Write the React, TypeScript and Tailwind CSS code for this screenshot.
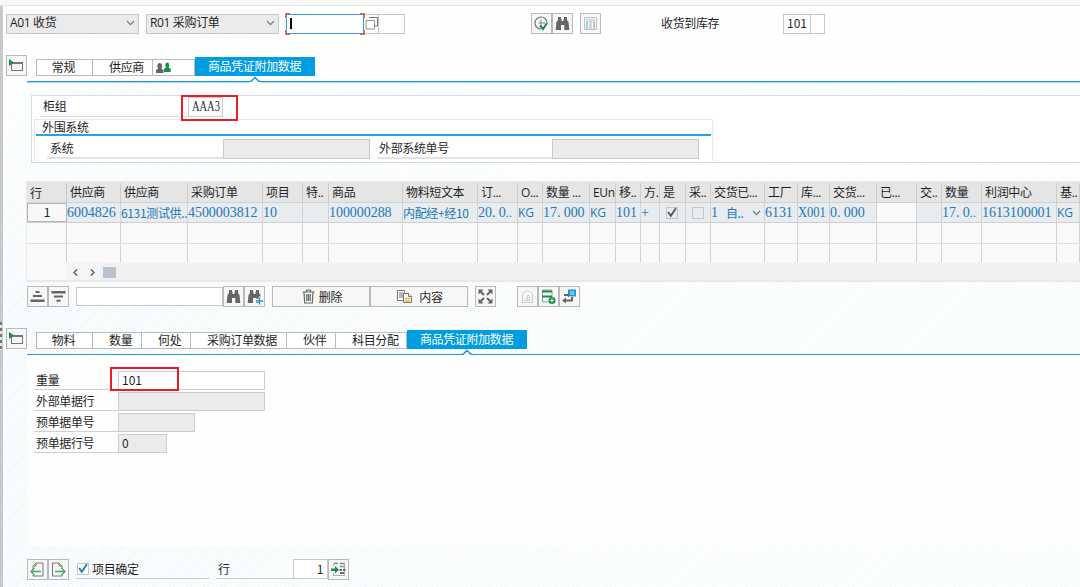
import React from 'react';

interface Column {
  title: string;
  width: string;
  value?: string;
  kind?: 'serif' | 'code' | 'sans' | 'latin' | 'check' | 'uncheck' | 'select' | 'blank';
}

const columns: Column[] = [
  { title: '供应商', width: 'w-[54px]', value: '6004826', kind: 'serif' },
  { title: '供应商', width: 'w-[67px]', value: '6131测试供..', kind: 'sans' },
  { title: '采购订单', width: 'w-[75px]', value: '4500003812', kind: 'serif' },
  { title: '项目', width: 'w-[40px]', value: '10', kind: 'serif' },
  { title: '特..', width: 'w-[26px]' },
  { title: '商品', width: 'w-[74px]', value: '100000288', kind: 'serif' },
  { title: '物料短文本', width: 'w-[75px]', value: '内配经+经10', kind: 'sans' },
  { title: '订...', width: 'w-[40px]', value: '20.0..', kind: 'serif' },
  { title: 'O...', width: 'w-[25px]', value: 'KG', kind: 'latin' },
  { title: '数量 ...', width: 'w-[47px]', value: '17.000', kind: 'serif' },
  { title: 'EUn', width: 'w-[26px]', value: 'KG', kind: 'latin' },
  { title: '移..', width: 'w-[25px]', value: '101', kind: 'serif' },
  { title: '方.', width: 'w-[19px]', value: '+', kind: 'serif' },
  { title: '是', width: 'w-[26px]', kind: 'check' },
  { title: '采..', width: 'w-[25px]', kind: 'uncheck' },
  { title: '交货已...', width: 'w-[54px]', value: '1', kind: 'select' },
  { title: '工厂', width: 'w-[33px]', value: '6131', kind: 'serif' },
  { title: '库...', width: 'w-[32px]', value: 'X001', kind: 'code' },
  { title: '交货...', width: 'w-[47px]', value: '0.000', kind: 'serif' },
  { title: '已...', width: 'w-[40px]', kind: 'blank' },
  { title: '交..', width: 'w-[25px]' },
  { title: '数量', width: 'w-[40px]', value: '17.0..', kind: 'serif' },
  { title: '利润中心', width: 'w-[75px]', value: '1613100001', kind: 'serif' },
  { title: '基..', width: 'w-[23px]', value: 'KG', kind: 'latin' },
];

const latin = "font-['Open_Sans','Noto_Sans_CJK_SC',sans-serif]";
const serif = "font-['Liberation_Serif',serif] text-[14px] tracking-[-0.05px]";

// Decimal points take a full digit cell, trailing dots stay narrow
const Digits: React.FC<{ text: string }> = ({ text }) => {
  const [, number, rest] = text.match(/^(.*?)(\.\.)?$/) ?? [];
  const parts = (number ?? text).split('.');
  return (
    <span className={serif}>
      {parts[0]}
      {parts.length > 1 && <span className="tracking-[3.3px]">.</span>}
      {parts[1]}
      {rest && <span className="text-[12px] tracking-[0.3px]">{rest}</span>}
    </span>
  );
};

const IconButton: React.FC<{ children: React.ReactNode }> = ({ children }) => (
  <button className="w-[21px] h-[21px] shrink-0 flex items-center justify-center bg-[#f7f7f7] border border-[#b9b9b9]">
    {children}
  </button>
);

const Chevron = () => (
  <svg width="9" height="6" viewBox="0 0 9 6" fill="none" stroke="#777" strokeWidth="1.1"><path d="M1 1l3.5 3.7L8 1" /></svg>
);

const Binoculars: React.FC<{ plus?: boolean }> = ({ plus }) => (
  <svg width="17" height="17" viewBox="0 0 17 17">
    <path d="M4 2h3v2h.5v2h2V4h.5V2h3v3l1.500 2 .8 8h-5v-5H7v5H1.700l.8-8L4 5z" fill="#666" />
    {plus && <path d="M14.500 8.500v8M10 12.500h7" stroke="#f7f7f7" strokeWidth="3.500" />}
    {plus && <path d="M13.500 9.500v7M10 13h7" stroke="#1a9ad9" strokeWidth="1.300" />}
  </svg>
);

const CollapseButton = () => (
  <IconButton>
    <svg width="17" height="17" viewBox="0 0 17 17">
      <rect x="3.500" y="5.500" width="11" height="8" fill="#f4f4f4" stroke="#777" />
      <path d="M4 6h10" stroke="#777" strokeWidth="2" />
      <path d="M1 2l5 3.500L1 9z" fill="#0f9246" />
    </svg>
  </IconButton>
);

const FilledCheck: React.FC<{ color: string }> = ({ color }) => (
  <svg width="11" height="11" viewBox="0 0 11 11" fill="none" stroke={color} strokeWidth="2"><path d="M1.200 5l3 4.200L9.800.8" /></svg>
);

const Tab: React.FC<{ width: string; children: React.ReactNode; className?: string }> = ({ width, children, className = 'pr-[2px] justify-center' }) => (
  <div className={`${width} h-[17px] flex items-center border border-l-0 border-[#b9b9b9] bg-white leading-[14px] pb-px ${className}`}>{children}</div>
);

const ActiveTab = () => (
  <div className="w-[120px] h-[19px] flex items-center justify-center pr-px pb-px bg-[#009de0] text-white">商品凭证附加数据</div>
);

// Blue rule under a tab strip with the notch below the active tab
const TabRule: React.FC<{ notch: string }> = ({ notch }) => (
  <div className="h-[6px] ml-6 flex items-end">
    <div className={`${notch} h-px bg-[#1a9fdb] shadow-[0_1px_0_#9ed9f2]`} />
    <svg width="12" height="6" viewBox="0 0 12 6" fill="none" stroke="#1a9fdb" strokeWidth="1.600"><path d="M0 5.500h2L6 1.300l4 4.200h2" /></svg>
    <div className="flex-1 h-px bg-[#1a9fdb] shadow-[0_1px_0_#9ed9f2]" />
  </div>
);

const Cell: React.FC<{ col: Column }> = ({ col }) => {
  switch (col.kind) {
    case 'serif':
      return <Digits text={col.value ?? ''} />;
    case 'code':
      return <span className={`${serif} inline-block origin-left scale-x-[0.9]`}>{col.value}</span>;
    case 'latin':
      return <span className={`${latin} text-[12px] tracking-[-0.2px]`}>{col.value}</span>;
    case 'check':
      return <span className="w-[12px] h-[12px] ml-[6px] border border-[#c6c6c6] flex items-center justify-center"><FilledCheck color="#555" /></span>;
    case 'uncheck':
      return <span className="w-[12px] h-[12px] ml-[6px] border border-[#c6c6c6]" />;
    case 'select':
      return (
        <>
          <Digits text="1" />
          <span className="ml-[8px] mr-[2px] flex-1">自..</span>
          <span className="mr-[3px]"><Chevron /></span>
        </>
      );
    default:
      return <span>{col.value}</span>;
  }
};

const ItemTable = () => (
  <div className="w-[1054px] h-[101px] ml-[23px] mt-[18px] border-t border-b-2 border-l border-[#e9e9e9] bg-[#f9f9f9] overflow-hidden">
    <div className="flex h-[21px] pt-px bg-[#e5e5e5] border-b border-[#d2d2d2]">
      <div className="w-[40px] shrink-0 pl-[3px] border-r border-[#c6c6c6] flex items-center">行</div>
      {columns.map((col, i) => (
        <div key={i} className={`${col.width} ${latin} shrink-0 pl-[3px] border-r border-[#cdcdcd] flex items-center whitespace-pre overflow-hidden`}>
          {col.title}
        </div>
      ))}
    </div>
    <div className="flex h-[20px] bg-[#e8ecef] text-[#2278b5] border-b border-[#cfcfcf]">
      <div className="w-[40px] shrink-0 border border-[#b5b5b5] bg-[#f8f8f8] text-[#222] flex items-center justify-center pb-px">1</div>
      {columns.map((col, i) => (
        <div key={i} className={`${col.width} shrink-0 border-r border-[#d3d3d3] flex items-center whitespace-nowrap overflow-hidden ${col.kind === 'blank' ? 'bg-[#f9f9f9]' : ''}`}>
          <Cell col={col} />
        </div>
      ))}
    </div>
    {['h-[21px] border-b', 'h-[18px]'].map(size => (
      <div key={size} className={`flex ${size} border-[#dcdcdc]`}>
        <div className="w-[40px] shrink-0 border-r border-[#cfcfcf]" />
        {columns.map((col, i) => <div key={i} className={`${col.width} shrink-0 border-r border-[#d3d3d3]`} />)}
      </div>
    ))}
    <div className="ml-[40px] h-[19px] bg-[#f0f0f0] flex items-center border-t border-[#f5f5f5]">
      <div className="w-[17px] h-full flex items-center justify-center bg-[#f5f5f5]">
        <svg width="5" height="7" viewBox="0 0 5 7" fill="none" stroke="#555" strokeWidth="1.300"><path d="M4 .5l-3 3 3 3" /></svg>
      </div>
      <div className="w-[17px] h-full flex items-center justify-center bg-[#f5f5f5]">
        <svg width="5" height="7" viewBox="0 0 5 7" fill="none" stroke="#555" strokeWidth="1.300"><path d="M1 .5l3 3-3 3" /></svg>
      </div>
      <div className="w-[13px] h-[11px] ml-[2px] bg-[#b8c3cd]" />
    </div>
  </div>
);

const TableToolbar = () => (
  <div className="flex items-center h-[21px] mt-[4px] ml-[24px]">
    <IconButton>
      <svg width="15" height="13" viewBox="0 0 15 13" fill="#666"><path d="M5.500 1h4v2h-4zM3 5h9v2H3zM.5 9.500h14V12H.5z" /></svg>
    </IconButton>
    <IconButton>
      <svg width="15" height="13" viewBox="0 0 15 13" fill="#666"><path d="M.5 1h14v2.600H.5zM3 5.600h9v2H3zM5.500 9.700h4v2h-4z" /></svg>
    </IconButton>
    <div className="w-[147px] h-[19px] ml-[7px] bg-white border border-[#c6c6c6]" />
    <IconButton><Binoculars /></IconButton>
    <IconButton><Binoculars plus /></IconButton>
    <button className="w-[98px] h-[21px] ml-[7px] bg-[#f7f7f7] border border-[#b9b9b9] flex items-center justify-center gap-[4px] pl-[2px]">
      <svg width="13" height="15" viewBox="0 0 13 15" fill="none" stroke="#666" strokeWidth="1.200"><path d="M.5 3h12M4.500 3V1h4v2M2 3l.7 11h7.600L11 3M4.800 5v7M6.500 5v7M8.200 5v7" /></svg>
      删除
    </button>
    <button className="w-[98px] h-[21px] bg-[#f7f7f7] border border-[#b9b9b9] flex items-center justify-center gap-[7px] pl-[2px]">
      <svg width="15" height="15" viewBox="0 0 15 15" fill="#f7f7f7" stroke="#777">
        <path d="M.5 1.500h7v10h-7zM2 4h4M2 6h4M2 8h4" />
        <path d="M6.500 4.500h5l3 3v6h-8z" />
        <path d="M11.500 4.500v3h3" />
        <path d="M8 9.500h5M8 12h5" stroke="#eab53c" strokeWidth="1.500" />
      </svg>
      内容
    </button>
    <div className="ml-[7px] flex">
      <IconButton>
        <svg width="17" height="17" viewBox="0 0 17 17" fill="#666" stroke="#666" strokeWidth="2">
          <path d="M3.500 3.500l3.500 3.500M13.500 3.500L10 7M3.500 13.500L7 10M13.500 13.500L10 10" />
          <path d="M1.500 1.500h5l-5 5zM15.500 1.500v5l-5-5zM1.500 15.500v-5l5 5zM15.500 15.500h-5l5-5z" stroke="none" />
        </svg>
      </IconButton>
    </div>
    <div className="ml-[21px] flex">
      <IconButton>
        <svg width="15" height="15" viewBox="0 0 15 15" fill="none" stroke="#cdcdcd"><path d="M2.500 13.500v-9l5-3 5 3v9zM5 11V9M7.500 11V6.500h2V11M5 11.500h5" /></svg>
      </IconButton>
      <IconButton>
        <svg width="17" height="17" viewBox="0 0 17 17" fill="none">
          <path d="M2.500 2v12h6M2.500 2h9.500v7" stroke="#999" />
          <path d="M2 3.500h10M2 8.500h10" stroke="#0f9246" strokeWidth="2" />
          <circle cx="12" cy="12.500" r="3.500" fill="#0f9246" />
          <path d="M12 10.500v4M10 12.500h4" stroke="#fff" />
        </svg>
      </IconButton>
      <IconButton>
        <svg width="17" height="17" viewBox="0 0 17 17" fill="none">
          <path d="M3 7h5M5 12.500h6V9" stroke="#666" strokeWidth="2" />
          <path d="M5 9.500l-4 3 4 3zM7 4.500L10 7l-3 2.500z" fill="#666" />
          <path d="M7 1.500h8v7H9.500L7 5z" fill="#1499db" />
          <path d="M9 4h4.500M9 6h4.500" stroke="#d9f0fb" />
        </svg>
      </IconButton>
    </div>
  </div>
);

const FormRow: React.FC<{ label: string; width: string; value?: string; editable?: boolean }> = ({ label, width, value, editable }) => (
  <div className="flex h-[19px]">
    <div className="w-[84px] pl-[2px] border-b border-[#cfcfcf] flex items-center">{label}</div>
    <div className={`${width} border border-[#cccccc] pl-[3px] pb-[2px] flex items-center text-[12px] tracking-normal ${editable ? 'bg-white' : 'bg-[#ebebeb]'}`}>{value}</div>
  </div>
);

export default function App() {
  return (
    <div className="relative w-[1080px] h-[587px] overflow-hidden flex flex-col bg-white text-[#1f1f1f] text-[12px] leading-[16px] tracking-[-0.35px] font-['Noto_Sans_CJK_SC',sans-serif]">
      <div className="h-[6px] shrink-0 bg-[#f8f8f8] border-b border-[#e4e4e4]" />
      <div className="flex-1 border-l-[3px] border-[#c8c8c8] bg-[linear-gradient(to_bottom,#fff,#ffffff00_260px),linear-gradient(to_right,#ffffff20,#ffffff90_60%),repeating-linear-gradient(135deg,#eff6f9_0_1px,#fbfdfe_1px_3px)]">

        {/* Header line */}
        <div className="flex items-center h-[35px]">
          <div className="w-[133px] h-[20px] ml-[3px] px-[3px] pb-px flex items-center justify-between bg-[#ebebeb] border border-[#c6c6c6]">
            <span className={latin}>A01 收货</span><Chevron />
          </div>
          <div className="w-[133px] h-[20px] ml-[7px] px-[3px] pb-px flex items-center justify-between bg-[#ebebeb] border border-[#c6c6c6]">
            <span className={latin}>R01 采购订单</span><Chevron />
          </div>
          <div className="relative w-[78px] h-[20px] ml-[7px] pl-[3px] flex items-center bg-white border border-[#3b9bd0]">
            <div className="w-[2px] h-[11px] bg-black" />
            <svg className="absolute -left-[2px] -top-[2px]" width="80" height="22" viewBox="0 0 80 22" fill="none" stroke="#ef5a55" strokeWidth="1.300">
              <path d="M.7 5V.7H5M75 .7h4.300V5M.7 17v4.300H5M75 21.300h4.300V17" />
            </svg>
          </div>
          <div className="w-[15px] h-[20px] flex items-center justify-center border border-l-0 border-[#c6c6c6] bg-white">
            <svg width="13" height="13" viewBox="0 0 13 13" fill="none"><path d="M4 .5h8.500V9H10" stroke="#777" /><path d="M1 3.500h8.500V12H1z" stroke="#9b8f7b" fill="#fff" /></svg>
          </div>
          <div className="w-[26px] h-[20px] border border-l-0 border-[#c6c6c6] bg-white" />
          <div className="ml-[126px] flex">
            <IconButton>
              <svg width="17" height="17" viewBox="0 0 17 17" fill="none">
                <path d="M14 7.500A6 6 0 1 0 8 14" stroke="#777" strokeWidth="1.200" />
                <path d="M8 4.500V11M5.500 8H12" stroke="#888" />
                <path d="M7 10.500l3 3.500 4-6" stroke="#0f9246" strokeWidth="2" />
              </svg>
            </IconButton>
            <IconButton><Binoculars /></IconButton>
          </div>
          <div className="ml-[7px] flex">
            <IconButton>
              <svg width="15" height="15" viewBox="0 0 15 15" fill="none">
                <path d="M1.500 1.500h12v12h-12z" fill="#f2f2f2" stroke="#c4c4c4" />
                <path d="M3 4h9" stroke="#d5d5d5" strokeWidth="1.500" />
                <path d="M4 5v8" stroke="#97d5f0" strokeWidth="2" />
                <path d="M7.500 5v8M11 5v8" stroke="#c9c9c9" strokeWidth="2" />
              </svg>
            </IconButton>
          </div>
          <div className="w-[122px] ml-[60px] pb-px">收货到库存</div>
          <div className="w-[28px] h-[20px] pl-[3px] pb-[2px] flex items-center tracking-normal bg-white border border-[#c6c6c6]">101</div>
          <div className="w-[14px] h-[20px] bg-white border border-l-0 border-[#c6c6c6]" />
        </div>

        {/* Header tabs */}
        <div className="flex items-end h-[35px] pl-[3px]">
          <CollapseButton />
          <div className="flex items-end ml-[9px] border-l border-[#b9b9b9] h-[17px]">
            <Tab width="w-[56px]">常规</Tab>
            <Tab width="w-[60px]" className="pl-[16px]">供应商</Tab>
            <Tab width="w-[42px]" className="pl-[3px]">
              <svg width="15" height="11" viewBox="0 0 15 11">
                <path d="M0 11V8l2-1.500C1 5 1 1 3.700 1S6.500 5 5.500 6.500L7.500 8v3z" fill="#666" />
                <path d="M8 10V7l2-1.500C9 4 9 .5 11.300.500S13.500 4 12.700 5.500l2 1.500v3z" fill="#0f9246" />
              </svg>
            </Tab>
            <ActiveTab />
          </div>
        </div>
        <TabRule notch="w-[222px]" />

        {/* Header detail panel */}
        <div className="relative h-[68px] ml-[28px] mt-[13px] border border-r-0 border-[#cfdeea] bg-white">
          <div className="flex h-[23px] pl-[8px]">
            <div className="w-[148px] h-[21px] pl-[3px] border-b border-[#dedede] flex items-center">柜组</div>
            <div className="w-[35px] h-[20px] mt-[1px] pl-[3px] border border-[#cccccc] flex items-center overflow-hidden">
              <span className={`${serif} inline-block origin-left scale-x-[0.75]`}>AAA3</span>
            </div>
          </div>
          <div className="w-[679px] h-[42px] ml-[2px] border border-b-0 border-[#e9e9e9]">
            <div className="w-[675px] h-[16px] ml-px pl-[6px] pb-px flex items-center border-b-2 border-[#20a6e2]">外围系统</div>
            <div className="flex h-[20px] mt-[3px] pl-[12px]">
              <div className="w-[176px] pl-[3px] border-b-2 border-[#e2e2e2] flex items-center">系统</div>
              <div className="w-[147px] bg-[#ebebeb] border border-[#c9c9c9]" />
              <div className="w-[175px] ml-[7px] pl-[2px] border-b-2 border-[#e2e2e2] flex items-center">外部系统单号</div>
              <div className="w-[147px] bg-[#ebebeb] border border-[#c9c9c9]" />
            </div>
          </div>
          <div className="absolute left-[149px] -top-px w-[57px] h-[26px] border-2 border-[#e81e25]" />
        </div>

        <ItemTable />
        <TableToolbar />

        {/* Item tabs */}
        <div className="flex items-end h-[42px] pl-[3px]">
          <CollapseButton />
          <div className="flex items-end ml-[9px] border-l border-[#b9b9b9] h-[17px]">
            <Tab width="w-[56px]">物料</Tab>
            <Tab width="w-[49px]" className="pl-[16px]">数量</Tab>
            <Tab width="w-[49px]" className="pl-[16px]">何处</Tab>
            <Tab width="w-[96px]" className="pl-[16px]">采购订单数据</Tab>
            <Tab width="w-[49px]" className="pl-[16px]">伙伴</Tab>
            <Tab width="w-[71px]" className="pl-[16px]">科目分配</Tab>
            <ActiveTab />
          </div>
        </div>
        <TabRule notch="w-[434px]" />

        {/* Item detail */}
        <div className="relative h-[191px] ml-[24px] pl-[7px] pt-[16px] flex flex-col gap-[2px] bg-[#fefefe]">
          <FormRow label="重量" width="w-[147px]" value="101" editable />
          <FormRow label="外部单据行" width="w-[147px]" />
          <FormRow label="预单据单号" width="w-[77px]" />
          <FormRow label="预单据行号" width="w-[49px]" value="0" />
          <div className="absolute left-[83px] top-[12px] w-[69px] h-[24px] border-2 border-[#e81e25]" />
        </div>

        {/* Footer */}
        <div className="flex h-[21px] mt-[13px] ml-[24px]">
          <IconButton>
            <svg width="17" height="17" viewBox="0 0 17 17" fill="none"><path d="M4 8V5l3-3h7v13H4v-1M7 2v3H4" stroke="#777" /><path d="M12 10.500H2M5.500 7L2 10.500 5.500 14" stroke="#43ab6b" strokeWidth="1.300" /></svg>
          </IconButton>
          <IconButton>
            <svg width="17" height="17" viewBox="0 0 17 17" fill="none"><path d="M12 8V5L9 2H2.500v13H12v-1M9 2v3h3" stroke="#777" /><path d="M5 10.500h10M11.500 7l3.500 3.500-3.500 3.500" stroke="#43ab6b" strokeWidth="1.300" /></svg>
          </IconButton>
          <div className="w-[133px] h-[20px] ml-[7px] flex items-center border-b border-[#c9c9c9]">
            <span className="w-[12px] h-[12px] ml-[1px] mr-[3px] bg-white border border-[#c6c6c6] flex items-center justify-center"><FilledCheck color="#0a84c6" /></span>
            项目确定
          </div>
          <div className="w-[77px] h-[20px] ml-[7px] pl-[2px] flex items-center border-b border-[#c9c9c9]">行</div>
          <div className="w-[35px] h-[20px] pr-[4px] pb-px flex items-center justify-end bg-white border border-[#c9c9c9]">1</div>
          <IconButton>
            <svg width="17" height="17" viewBox="0 0 17 17" fill="none">
              <path d="M3.500 5V2.500M14.500 2.500v12h-11V12" stroke="#aaa" />
              <path d="M4 2.500h4M9.500 2.500h5M10 5.500h4" stroke="#888" strokeWidth="1.300" />
              <path d="M9.500 9h2.500M13 9h2.500M10 12h4" stroke="#666" strokeWidth="1.800" />
              <path d="M1 7.500h4V5l4 3.800L5 12.500V10H1z" fill="#0f9246" />
            </svg>
          </IconButton>
        </div>
      </div>
      {/* Splitter grip on the left edge */}
      <div className="absolute left-0 top-[322px] w-[2px] h-[28px] bg-[repeating-linear-gradient(to_bottom,#777_0_3px,#e6e6e6_3px_6px)]" />
    </div>
  );
}
